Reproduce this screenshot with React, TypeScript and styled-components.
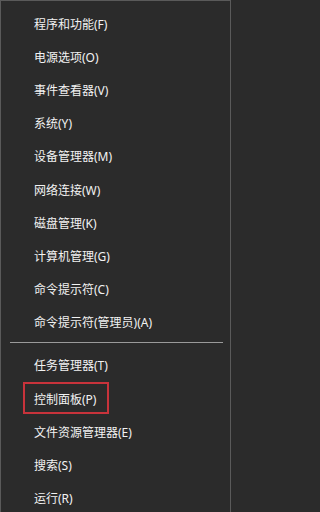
import React from "react";
import { createGlobalStyle, styled } from "styled-components";

const GlobalStyle = createGlobalStyle`
  html, body {
    margin: 0;
    padding: 0;
    background: #2b2b2b;
  }
`;

interface MenuEntry {
  label: string;
  highlighted?: boolean;
}

const topItems: MenuEntry[] = [
  { label: "程序和功能(F)" },
  { label: "电源选项(O)" },
  { label: "事件查看器(V)" },
  { label: "系统(Y)" },
  { label: "设备管理器(M)" },
  { label: "网络连接(W)" },
  { label: "磁盘管理(K)" },
  { label: "计算机管理(G)" },
  { label: "命令提示符(C)" },
  { label: "命令提示符(管理员)(A)" },
];

const bottomItems: MenuEntry[] = [
  { label: "任务管理器(T)" },
  { label: "控制面板(P)", highlighted: true },
  { label: "文件资源管理器(E)" },
  { label: "搜索(S)" },
  { label: "运行(R)" },
];

const App: React.FC = () => {
  const renderItem = (item: MenuEntry) => (
    <MenuItem key={item.label}>
      <Label $highlighted={item.highlighted}>{item.label}</Label>
    </MenuItem>
  );

  return (
    <>
      <GlobalStyle />
      <MenuPanel>
        <MenuGroup>{topItems.map(renderItem)}</MenuGroup>
        <Separator />
        <MenuGroup>{bottomItems.map(renderItem)}</MenuGroup>
      </MenuPanel>
    </>
  );
};

const MenuPanel = styled.div`
  box-sizing: border-box;
  width: 231px;
  height: 512px;
  overflow: hidden;
  background: #2b2b2b;
  border: 1px solid #5a5a5a;
  border-bottom: none;
  padding-top: 6px;
  font-family: "Noto Sans", "Noto Sans CJK SC", sans-serif;
  font-size: 12px;
  color: #f2f2f2;
`;

const MenuGroup = styled.div`
  display: flex;
  flex-direction: column;
`;

const MenuItem = styled.div`
  display: flex;
  align-items: center;
  height: 33.2px;
  padding-left: 33px;
`;

const Label = styled.span<{ $highlighted?: boolean }>`
  display: flex;
  align-items: center;
  box-sizing: border-box;
  white-space: nowrap;
  ${({ $highlighted }) =>
    $highlighted &&
    `
    height: 32px;
    margin: -2px 0 0 -11px;
    padding: 2px 11px 0 9px;
    border: 2px solid #c8333b;
  `}
`;

const Separator = styled.div`
  height: 1px;
  margin: 3px 7px 6px 9px;
  background: #9a9a9a;
`;

export default App;
